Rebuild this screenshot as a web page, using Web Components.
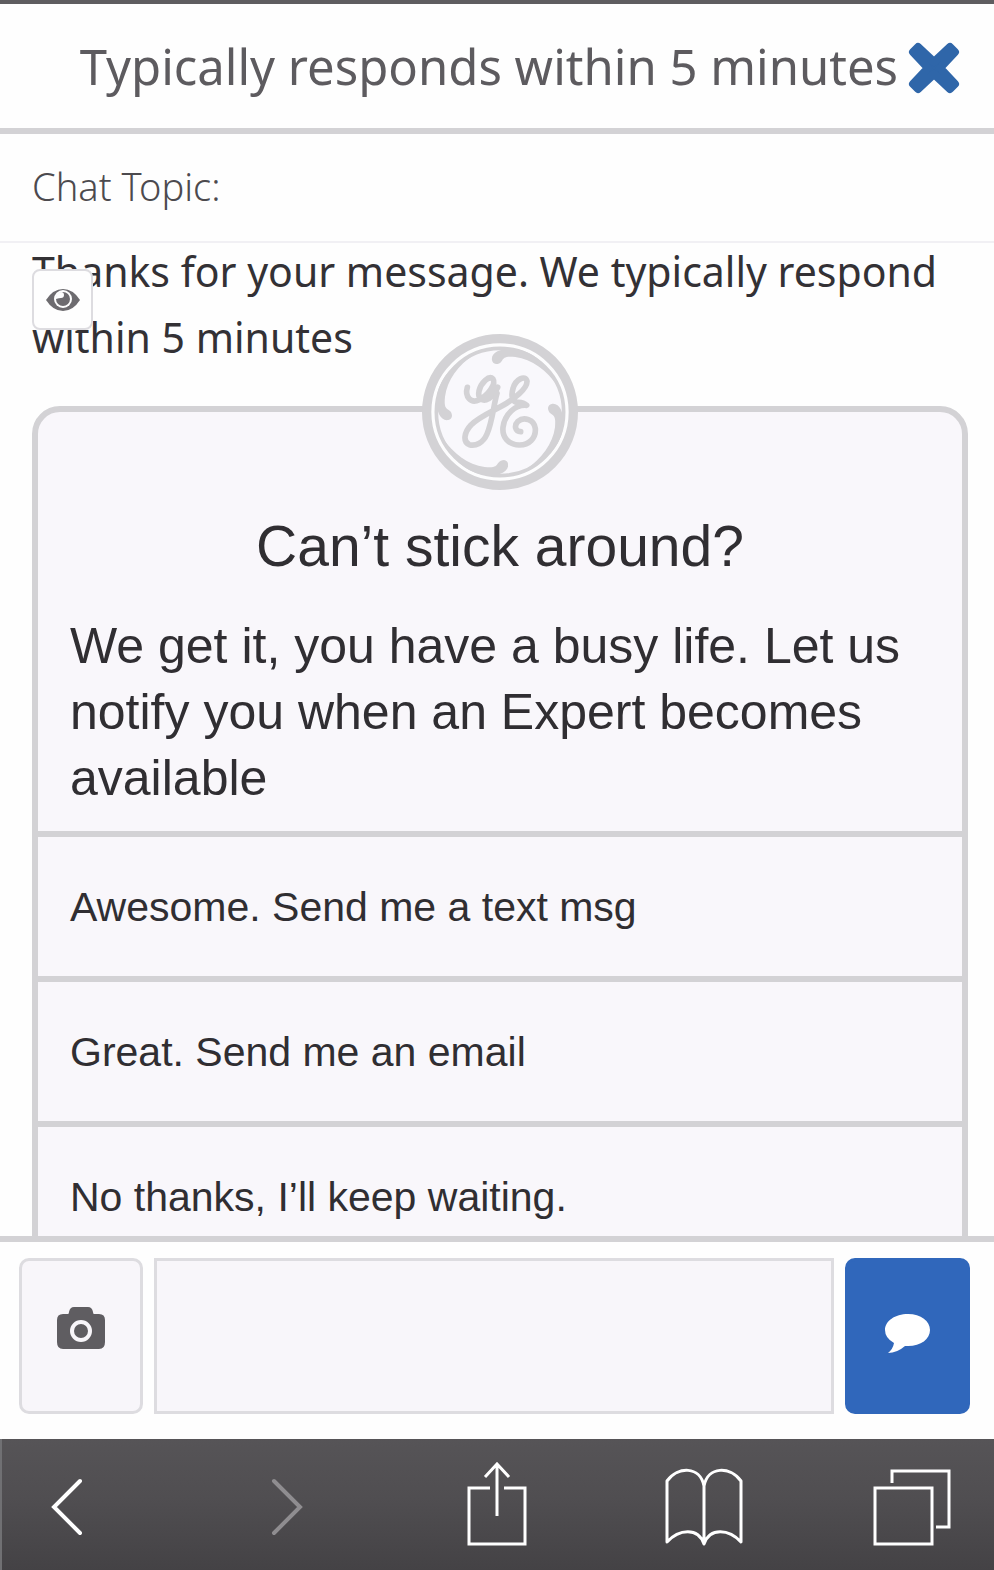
<!DOCTYPE html>
<html lang="en">
<head>
<meta charset="utf-8">
<meta name="viewport" content="width=device-width, initial-scale=1">
<title>Chat</title>
<style>
  html, body { height: 100%; margin: 0; }
  body { background: #fefefe; }
</style>
</head>
<body>
<chat-app></chat-app>

<script>
const define = (name, html) => {
  const template = document.createElement('template');
  template.innerHTML = html;
  customElements.define(name, class extends HTMLElement {
    constructor() {
      super();
      this.attachShadow({ mode: 'open' }).append(template.content.cloneNode(true));
    }
  });
};

define('chat-header', `
<style>
  :host { display: flex; align-items: center; justify-content: flex-end; gap: 10px;
    box-sizing: border-box; height: 134px; padding: 4px 34px 0 24px;
    border-top: 4px solid #5f5d60; border-bottom: 6px solid #d3d2d5; }
  h1 { margin: 0; padding-bottom: 4px; font-size: 49px; line-height: 68px; font-weight: 400; color: #5d5b5f; white-space: nowrap; }
  button { flex: none; display: block; padding: 0; border: 0; background: none; }
  svg { display: block; }
</style>
<h1><slot></slot></h1>
<button aria-label="Close chat"><svg width="52" height="52" viewBox="0 0 52 52" fill="#2f66a9" stroke="#2f66a9" stroke-width="8" stroke-linejoin="round"><path d="M10 5 26 20 42 5 47 10 32 26 47 42 42 47 26 32 10 47 5 42 20 26 5 10z"/></svg></button>`);

define('chat-topic', `
<style>
  :host { display: flex; align-items: center; box-sizing: border-box; height: 109px;
    padding: 0 32px 4px; border-bottom: 2px solid #f1f0f4; font-size: 38px; line-height: 52px; font-weight: 300; color: #4c4a4e; }
</style>
<slot></slot>`);

define('chat-message', `
<style>
  :host { display: block; position: relative; font-size: 41px; line-height: 66px; font-weight: 400; color: #333135; }
  p { margin: 0; }
  button { position: absolute; left: 0; top: 31px; width: 61px; height: 61px; padding: 0;
    display: grid; place-items: center; border: 2px solid #dddce0; border-radius: 8px; background: #fefefe; }
</style>
<p><slot></slot></p>
<button aria-label="Preview message"><svg width="34" height="24" viewBox="0 0 34 24"><path d="M0 12Q7 1 17 1T34 12Q27 23 17 23T0 12z" fill="#6d6b6f"/><circle cx="17" cy="11" r="9" fill="#fefefe"/><circle cx="17" cy="11" r="7" fill="#6d6b6f"/><path d="M10 11a6 6 0 0 1 5-7 3 3 0 0 1 0 6q-2 0-5 1z" fill="#fefefe"/></svg></button>`);

const swirl = angle => `<path transform="rotate(${angle} 300 276)" d="M276 121C272 98 300 86 330 86 385 86 438 120 474 200 440 150 396 118 346 111 316 108 312 113 306 122 301 130 294 132 288 132 281 131 277 127 276 121z"/>`;
define('brand-badge', `
<style>:host { display: block; width: 156px; height: 156px; } svg { display: block; }</style>
<svg width="100%" height="100%" viewBox="66 42 468 468" fill="none" stroke="#d3d2d5" stroke-linecap="round" stroke-linejoin="round" role="img" aria-label="Brand">
  <circle cx="300" cy="276" r="220" fill="#fdfdfe" stroke-width="28"/>
  <circle cx="300" cy="276" r="191" fill="#f9f8fc" stroke-width="11"/>
  <g fill="#d3d2d5" stroke="none">${[0, 90, 180, 270].map(swirl).join('')}</g>
  <g stroke-width="17">
    <path d="M202 202C194 230 212 252 238 239 264 226 289 192 279 177 267 165 243 188 237 213 232 238 250 246 266 236 280 228 287 213 293 202"/>
    <path d="M291 220C281 255 277 305 261 342 249 370 226 379 208 374 188 366 192 337 213 315 239 290 276 275 304 259 342 238 382 206 381 184 377 163 346 178 339 206 332 229 338 246 352 247Q370 246 380 256C346 253 314 282 309 322 306 352 326 374 357 375 387 376 408 354 406 326 403 298 371 289 354 304 341 317 346 335 362 335"/>
  </g>
</svg>`);

define('offer-card', `
<style>
  :host { display: block; position: relative; box-sizing: border-box; border: 6px solid #d3d2d5;
    border-radius: 28px; background: #f9f7fb; color: #302e32; font-family: "Liberation Sans", Arial, sans-serif; }
  brand-badge { position: absolute; left: 50%; top: -78px; margin-left: -78px; }
  .body { padding: 101px 32px 20px; }
  h2 { margin: 0 0 34px; font-size: 57px; line-height: 66px; font-weight: 400; text-align: center; }
  p { margin: 0; font-size: 50px; line-height: 66px; }
</style>
<brand-badge></brand-badge>
<div class="body"><h2><slot name="title"></slot></h2><p><slot name="text"></slot></p></div>
<slot></slot>`);

define('offer-choice', `
<style>
  :host { display: block; border-top: 6px solid #d3d2d5; }
  button { display: block; width: 100%; height: 139px; padding: 0 32px; border: 0; background: none;
    font: inherit; font-size: 41px; line-height: 48px; text-align: left; color: inherit; }
</style>
<button><slot></slot></button>`);

define('chat-composer', `
<style>
  :host { display: grid; grid-template-columns: 124px 1fr 125px; gap: 11px; box-sizing: border-box;
    padding: 16px 24px 25px 19px; border-top: 6px solid #d3d2d5; background: #fefefe; }
  button, textarea { box-sizing: border-box; height: 156px; margin: 0; }
  button { display: grid; place-items: center; padding: 0 0 16px; border: 3px solid #dddce0; border-radius: 10px; background: #f8f6fa; }
  textarea { display: block; width: 100%; padding: 16px; border: 3px solid #dddce0; border-radius: 0; background: #f8f6fa;
    font: inherit; font-size: 41px; resize: none; outline: 0; }
  .send { border-color: #3067bb; background: #3067bb; padding: 0 0 4px; }
</style>
<button aria-label="Add photo"><svg width="48" height="42" viewBox="0 0 48 42"><path d="M6 7h5q1 0 1-2 1-5 5-5h14q4 0 5 5 0 2 1 2h5q6 0 6 6v22q0 7-6 7H6q-6 0-6-7V13q0-6 6-6z" fill="#5f5d61"/><circle cx="24" cy="24" r="9" fill="none" stroke="#f8f6fa" stroke-width="4"/></svg></button>
<textarea aria-label="Message"></textarea>
<button class="send" aria-label="Send message"><svg width="46" height="40" viewBox="0 0 46 40"><path d="M23 0C36 0 45 7 45 16S36 32 23 32H20Q12 39 3 39 8 35 9 29 0 24 0 16C0 7 10 0 23 0z" fill="#fff"/></svg></button>`);

define('browser-bar', `
<style>
  :host { display: flex; justify-content: space-between; align-items: center; box-sizing: border-box; height: 131px;
    padding: 0 43px 2px 40px; border-left: 2px solid #707073; background: linear-gradient(#565457, #504e51 45%, #444245); }
  button { display: block; width: 78px; padding: 0; border: 0; background: none; }
  svg { display: block; margin: auto; fill: none; stroke: #fff; stroke-width: 3; }
  .chevron { stroke-width: 4; stroke-linecap: round; }
  :disabled .chevron { stroke: #8f8d90; }
</style>
<button aria-label="Back"><svg class="chevron" width="78" height="84" viewBox="0 0 78 84"><path d="M38 19 12 45l26 26"/></svg></button>
<button aria-label="Forward" disabled><svg class="chevron" width="78" height="84" viewBox="0 0 78 84"><path d="M24 19 50 45 24 71"/></svg></button>
<button aria-label="Share"><svg width="78" height="84" viewBox="0 0 78 84"><path d="M32 26H11v56h56V26H46M39 54V3M27 15 39 2 51 15"/></svg></button>
<button aria-label="Bookmarks"><svg width="78" height="84" viewBox="0 0 78 84" stroke-linejoin="round"><path d="M39 82V24C35 4 13 4 2 19V80C14 67 33 65 39 82 45 65 64 67 76 80V19C65 4 43 4 39 24"/></svg></button>
<button aria-label="Tabs"><svg width="78" height="84" viewBox="0 0 78 84"><path d="M2 26H59V82H2zM19 21V9H76V65H63"/></svg></button>`);

define('chat-app', `
<style>
  :host { display: flex; flex-direction: column; height: 100vh; overflow: hidden;
    font-family: "Noto Sans", "Open Sans", sans-serif; }
  chat-header, chat-topic, chat-composer, browser-bar { flex: none; }
  main { flex: 1; min-height: 0; overflow: hidden; padding: 0 26px 0 32px; }
  chat-message { margin-top: -5px; margin-bottom: 36px; }
</style>
<chat-header>Typically responds within 5 minutes</chat-header>
<chat-topic>Chat Topic:</chat-topic>
<main>
  <chat-message>Thanks for your message. We typically respond within 5 minutes</chat-message>
  <offer-card>
    <span slot="title">Can’t stick around?</span>
    <span slot="text">We get it, you have a busy life. Let us notify you when an Expert becomes available</span>
    <offer-choice>Awesome. Send me a text msg</offer-choice>
    <offer-choice>Great. Send me an email</offer-choice>
    <offer-choice>No thanks, I’ll keep waiting.</offer-choice>
  </offer-card>
</main>
<chat-composer></chat-composer>
<browser-bar></browser-bar>`);
</script>
</body>
</html>
